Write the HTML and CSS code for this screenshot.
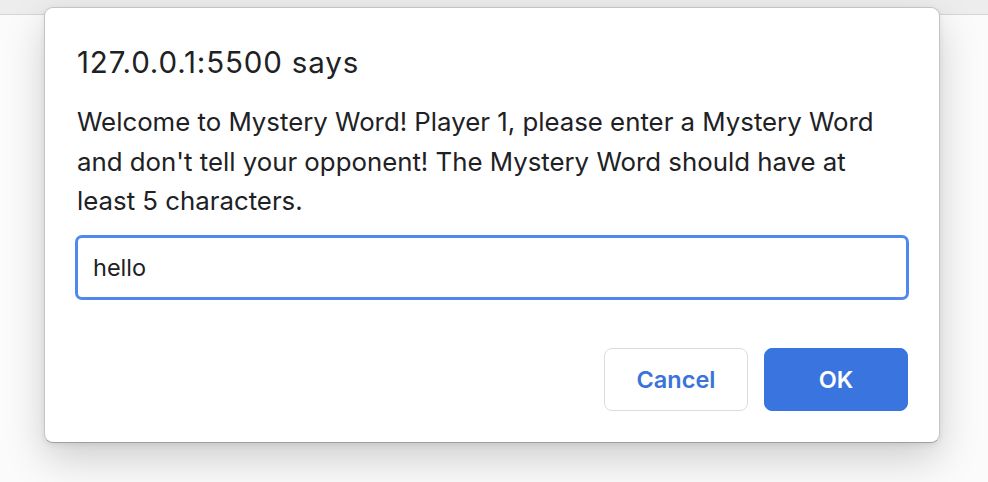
FILE: index.html
```html
<!DOCTYPE html>
<html lang="en">
<head>
<meta charset="utf-8">
<title>Mystery Word</title>
<link rel="stylesheet" href="styles.css">
</head>
<body>
<div class="tabstrip"></div>
<div class="page"></div>
<div class="dialog" role="dialog">
  <div class="title">127.0.0.1:5500 says</div>
  <div class="message">Welcome to Mystery Word! Player 1, please enter a Mystery Word and don't tell your opponent! The Mystery Word should have at least 5 characters.</div>
  <div class="field">hello</div>
  <div class="actions">
    <button class="btn btn-cancel">Cancel</button>
    <button class="btn btn-ok">OK</button>
  </div>
</div>
</body>
</html>
```
FILE: styles.css
```css
html, body {
  margin: 0;
  padding: 0;
}
body {
  width: 988px;
  height: 482px;
  overflow: hidden;
  background: #fdfdfd;
  font-family: Inter, "Noto Sans", "Liberation Sans", sans-serif;
  color: #202124;
}
.tabstrip {
  height: 14px;
  background: #ededee;
  border-bottom: 1px solid #d6d6d6;
}
.page {
  height: 467px;
  background: #fbfbfb;
}
.dialog {
  position: absolute;
  left: 44px;
  top: 7px;
  width: 896px;
  height: 436px;
  box-sizing: border-box;
  background: #ffffff;
  border-radius: 9px;
  border: 1px solid #c4c4c4;
  border-bottom-color: #9e9e9e;
  box-shadow: 0 16px 40px rgba(0, 0, 0, 0.18), 0 2px 6px rgba(0, 0, 0, 0.08);
  padding: 39px 30px 31px 30px;
  display: flex;
  flex-direction: column;
}
.title {
  font-size: 29.5px;
  line-height: 30px;
  letter-spacing: 0.85px;
  padding-left: 2px;
  color: #202124;
}
.message {
  margin-top: 25px;
  margin-right: 10px;
  font-size: 25.8px;
  line-height: 39.5px;
  padding-left: 2px;
  color: #202124;
}
.field {
  margin-top: 14px;
  height: 65px;
  box-sizing: border-box;
  border: 3px solid #5188eb;
  border-radius: 7px;
  padding: 0 15px;
  display: flex;
  align-items: center;
  font-size: 23.5px;
  color: #202124;
}
.actions {
  margin-top: 48px;
  display: flex;
  justify-content: flex-end;
  gap: 16px;
  padding-right: 1px;
}
.btn {
  width: 144px;
  height: 63px;
  box-sizing: border-box;
  border-radius: 8px;
  font-family: Inter, "Noto Sans", "Liberation Sans", sans-serif;
  font-size: 23.5px;
  font-weight: 600;
  cursor: pointer;
}
.btn-cancel {
  background: #ffffff;
  border: 1px solid #dadce0;
  color: #3a73d9;
}
.btn-ok {
  background: #3a74df;
  border: 1px solid #3a74df;
  color: #ffffff;
}
```
